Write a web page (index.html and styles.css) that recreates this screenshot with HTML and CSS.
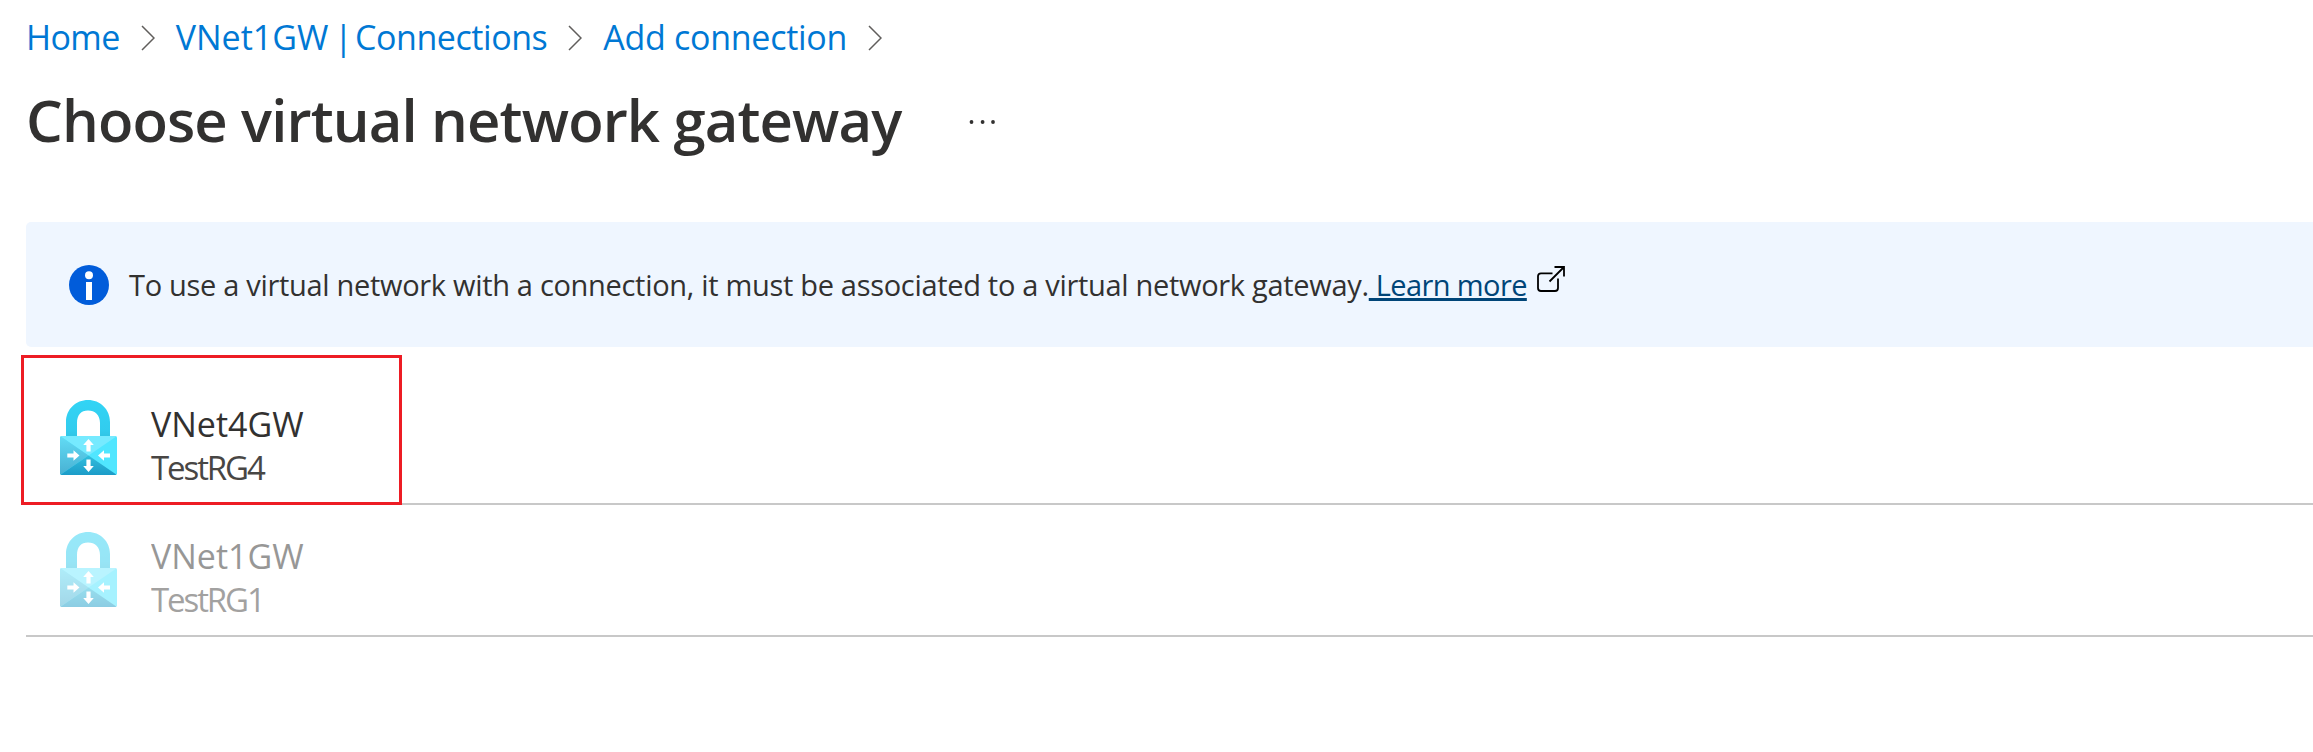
FILE: index.html
```
<!DOCTYPE html>
<html lang="en">
<head>
<meta charset="utf-8">
<title>Choose virtual network gateway</title>
<link rel="stylesheet" href="styles.css">
</head>
<body>
<svg class="defs" aria-hidden="true">
  <defs>
    <linearGradient id="shackle" x1="0" y1="1" x2="0" y2="0"><stop offset="0" stop-color="#32c4e4"/><stop offset=".2" stop-color="#32ccee"/><stop offset="1" stop-color="#32d4f5"/></linearGradient>
    <linearGradient id="bottom" x1="0" y1="0" x2="0" y2="1"><stop offset="0" stop-color="#32bedd"/><stop offset="1" stop-color="#1c9cc8"/></linearGradient>
    <linearGradient id="left" x1="0" y1="0" x2="0" y2="1"><stop offset="0" stop-color="#62dcf5"/><stop offset="1" stop-color="#48b0d2"/></linearGradient>
    <clipPath id="body"><rect x="0" y="36" width="57" height="39" rx="1.8"/></clipPath>
    <symbol id="gateway" viewBox="0 0 57 75">
      <path d="M6 37V22C6 9 16 0 28 0s22 9 22 22v15H40V23c0-8-5-12.500-12-12.500S17 15 17 23v14z" fill="url(#shackle)"/>
      <g clip-path="url(#body)">
        <path d="M0 36h57v39H0z" fill="#50e6ff"/>
        <path d="M0 36h57L28.500 55.500z" fill="#76eaff"/>
        <path d="M0 36l28.500 19.500L0 75z" fill="url(#left)"/>
        <path d="M0 75l28.500-19.500L57 75z" fill="url(#bottom)"/>
      </g>
      <path d="M28.500 39l5.300 6h-3.200v6.500h-4.200V45h-3.200zM28.500 72l-5.300-6h3.200v-6.500h4.200V66h3.200zM19.500 55.500l-6 5.300v-3.300H7.300v-4h6.200v-3.300zM38 55.500l6-5.300v3.300h6v4h-6v3.300z" fill="#fff"/>
    </symbol>
  </defs>
</svg>
<nav class="crumbs">
  <a class="crumb home">Home</a>
  <svg class="chevron" viewBox="0 0 14 26"><path d="M1 1l12 12L1 25"/></svg>
  <a class="crumb"><span class="resource">VNet1GW</span><span class="bar"> | </span><span class="section">Connections</span></a>
  <svg class="chevron" viewBox="0 0 14 26"><path d="M1 1l12 12L1 25"/></svg>
  <a class="crumb action">Add connection</a>
  <svg class="chevron" viewBox="0 0 14 26"><path d="M1 1l12 12L1 25"/></svg>
</nav>
<header class="heading">
  <h1 class="title">Choose virtual network gateway</h1>
  <svg class="more" viewBox="0 0 26 6"><circle cx="2.500" cy="3" r="1.900"/><circle cx="13.600" cy="3" r="1.900"/><circle cx="24" cy="3" r="1.900"/></svg>
</header>
<section class="banner">
  <svg class="info" viewBox="0 0 40 40"><circle cx="20" cy="20" r="20" fill="#015cda"/><circle cx="20" cy="10.300" r="4" fill="#fff"/><path d="M17 17h6v18h-6z" fill="#fff"/></svg>
  <p class="message">To use a virtual network with a connection, it must be associated to a virtual network gateway.<a class="learn">&nbsp;Learn more</a></p>
  <svg class="external" viewBox="0 0 28 26"><path d="M15.500 7.300H4Q1 7.300 1 10.300V22Q1 25 4 25h14q3 0 3-3V12.500M12.500 15.500L27 1M17.500 1H27v9.500"/></svg>
</section>
<main class="list">
  <article class="row">
    <svg class="lock"><use href="#gateway"/></svg>
    <div class="labels"><span class="name">VNet4GW</span><span class="group">TestRG4</span></div>
    <div class="highlight"></div>
  </article>
  <article class="row disabled">
    <svg class="lock"><use href="#gateway"/></svg>
    <div class="labels"><span class="name">VNet1GW</span><span class="group">TestRG1</span></div>
  </article>
</main>
</body>
</html>
```
FILE: styles.css
```
* { box-sizing: border-box; }
body { margin: 0; min-height: 752px; background: #fff; color: #323130; font-family: "Open Sans", "Noto Sans", sans-serif; overflow: hidden; }
.defs { position: absolute; width: 0; height: 0; }
.crumbs { display: flex; align-items: center; height: 76px; padding: 0 0 2px 26px; }
.crumb { color: #0078d4; font-size: 34px; line-height: 48px; white-space: pre; }
.home { letter-spacing: -.6px; }
.bar { letter-spacing: -3.2px; }
.section { letter-spacing: -.45px; }
.action { letter-spacing: -.29px; }
.chevron { width: 14px; height: 26px; margin: 2px 21px 0; fill: none; stroke: #605e5c; stroke-width: 1.5; }
.heading { display: flex; align-items: flex-start; height: 146px; padding: 4px 0 0 26px; }
.title { margin: 0; font-size: 58px; font-weight: 600; letter-spacing: -.86px; line-height: 80px; white-space: nowrap; }
.more { width: 26px; height: 6px; margin: 39px 0 0 67px; fill: #323130; }
.banner { display: flex; align-items: center; height: 125px; margin-left: 26px; padding-left: 43px; background: #eff6ff; border-radius: 5px 0 0 5px; }
.info { width: 40px; height: 40px; }
.message { margin: 0 0 0 20px; font-size: 29px; letter-spacing: -.31px; line-height: 40px; white-space: nowrap; }
.learn { color: #004578; letter-spacing: -.6px; text-decoration: underline; text-decoration-thickness: 3px; }
.external { width: 28px; height: 26px; margin: 0 0 11px 10px; fill: none; stroke: #000; stroke-width: 1.8; }
.list { margin-left: 26px; padding-top: 26px; }
.row { position: relative; display: flex; height: 132px; padding: 27px 0 0 34px; border-bottom: 2px solid #c8c8c8; }
.lock { width: 57px; height: 75px; }
.labels { display: flex; flex-direction: column; align-items: flex-start; margin-left: 34px; padding-top: 3px; font-size: 34px; line-height: 43px; }
.group { color: #484644; font-size: 33px; letter-spacing: -2.1px; }
.disabled .lock, .disabled .labels { opacity: .5; }
.highlight { position: absolute; left: -5px; top: -18px; width: 381px; height: 150px; border: 3px solid #ed1c24; }
```
